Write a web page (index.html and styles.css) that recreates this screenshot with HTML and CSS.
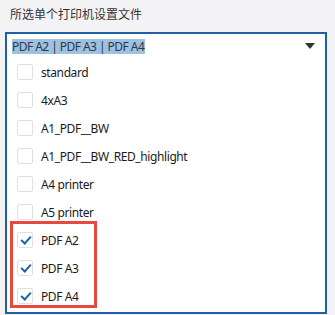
FILE: index.html
```html
<!DOCTYPE html>
<html lang="zh">
<head>
  <meta charset="UTF-8" />
  <title>打印机设置文件</title>
  <link rel="stylesheet" href="styles.css">
</head>
<body>
  <div class="field-label">所选单个打印机设置文件</div>

  <div class="select-box">
    <div class="select-head">
      <span class="selected-text">PDF A2 | PDF A3 | PDF A4</span>
      <span class="arrow"></span>
    </div>

    <ul class="options">
      <li><span class="check"></span>standard</li>
      <li><span class="check"></span>4xA3</li>
      <li><span class="check"></span>A1_PDF__BW</li>
      <li><span class="check"></span>A1_PDF__BW_RED_highlight</li>
      <li><span class="check"></span>A4 printer</li>
      <li><span class="check"></span>A5 printer</li>
      <li><span class="check on"></span>PDF A2</li>
      <li><span class="check on"></span>PDF A3</li>
      <li><span class="check on"></span>PDF A4</li>
      <div class="highlight-box"></div>
    </ul>
  </div>
</body>
</html>
```

FILE: styles.css
```css
* {
  box-sizing: border-box;
}

body {
  margin: 0;
  padding: 0 8px 1px 5px;
  background: #f3f3f6;
  font-family: "Noto Sans", "Noto Sans CJK SC", sans-serif;
  color: #222;
  overflow: hidden;
}

.field-label {
  height: 32px;
  padding: 5px 0 0 5px;
  font-family: "Noto Sans CJK SC", sans-serif;
  font-size: 12px;
  line-height: 18px;
  color: #333;
}

.select-box {
  background: #fff;
  border: 2px solid #1f5fa6;
  height: 282px;
}

.select-head {
  display: flex;
  align-items: center;
  justify-content: space-between;
  height: 24px;
  padding: 0 10px 0 5px;
}

.selected-text {
  background: #9dc1df;
  color: #2b3a4a;
  font-size: 12px;
  letter-spacing: -0.55px;
  line-height: 15px;
  padding: 0 1px 0 0;
}

.arrow {
  width: 0;
  height: 0;
  border-left: 5px solid transparent;
  border-right: 5px solid transparent;
  border-top: 6px solid #333;
}

.options {
  list-style: none;
  margin: 0;
  padding: 0;
  position: relative;
}

.options li {
  display: flex;
  align-items: center;
  height: 28px;
  padding-left: 10px;
  font-size: 12px;
  letter-spacing: -0.4px;
  color: #1a1a1a;
}

.check {
  width: 16px;
  height: 16px;
  border: 1px solid #e0e0e0;
  border-radius: 2px;
  margin-right: 8px;
  position: relative;
  background: #fff;
}

.check.on::after {
  content: "";
  position: absolute;
  left: 3px;
  top: 3px;
  width: 8px;
  height: 4px;
  border-left: 2.5px solid #1c62a6;
  border-bottom: 2.5px solid #1c62a6;
  transform: rotate(-48deg);
}

.highlight-box {
  position: absolute;
  left: 3px;
  top: 163px;
  width: 87px;
  height: 87px;
  border: 3px solid #e8493f;
}
```
